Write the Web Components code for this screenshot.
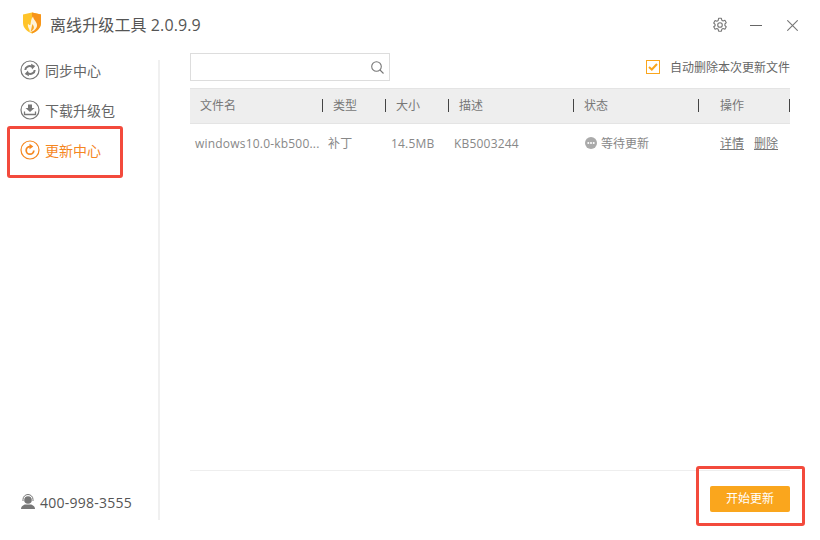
<!DOCTYPE html>
<html><head><meta charset="utf-8"><style>
html,body{margin:0;padding:0;background:#fff}
body{width:820px;height:540px;overflow:hidden;font-family:"Open Sans","Noto Sans CJK SC",sans-serif;color:#666}
</style></head><body>
<app-window>
  <title-bar slot="title"></title-bar>
  <side-nav slot="side">
    <nav-item icon="sync">同步中心</nav-item>
    <nav-item icon="down">下载升级包</nav-item>
    <nav-item icon="update" active mark>更新中心</nav-item>
  </side-nav>
  <update-panel slot="main"></update-panel>
</app-window>
<script>
const def=(n,html,cls)=>{customElements.define(n,class extends HTMLElement{constructor(){super();const s=this.attachShadow({mode:'open'});s.innerHTML=html;cls&&cls.call(this,s)}})};

def('app-window',`<style>
:host{display:grid;grid-template-columns:160px 1fr;grid-template-rows:50px 1fr;width:820px;height:540px}
.t{grid-column:1/3}
</style><div class="t"><slot name="title"></slot></div><slot name="side"></slot><slot name="main"></slot>`);

def('title-bar',`<style>
:host{display:flex;align-items:center;height:50px;padding:0 22px 2px 22px;box-sizing:border-box}
.logo{width:20px;height:22px;margin-right:8px;flex:none;margin-top:-2px}
.n{font-size:16px;color:#555;flex:1;letter-spacing:.1px;white-space:nowrap}
.c{display:flex;align-items:center;margin-top:2px}
svg{display:block}
</style>
<svg class="logo" viewBox="0 0 20 22"><path d="M1 2.500 L10 .5 L19 2.500 V11 C19 16.500 14 20 10 21.500 C6 20 1 16.500 1 11Z" fill="#ffc42a"/><path d="M10 .5 L19 2.500 V11 C19 16.500 14 20 10 21.500Z" fill="#f7941a"/><path d="M11 4.500 C11.500 8 15.500 10 15 14 C14.500 17.500 11 19.500 7.500 20.500 C9 18 5 16 6 11.500 C6.800 13 8 13.500 8.500 12.500 C9 10 8.800 7 11 4.500Z" fill="#fff3da"/><path d="M10.500 12 C11.500 14 12.500 15 11.500 17 C10.800 18.300 9.500 19 8.500 19.700 C9.500 17 9.500 15 10.500 12Z" fill="#f9a826"/></svg>
<div class="n">离线升级工具 2.0.9.9</div>
<div class="c">
<svg width="16" height="16" viewBox="0 0 16 16" fill="none" stroke="#777" stroke-width="1.100" style="margin-right:22px"><path d="M6.600 1.300h2.800l.4 1.900 1.300.7 1.800-.6 1.400 2.400-1.400 1.300v1.500l1.400 1.300-1.400 2.400-1.800-.6-1.300.7-.4 1.900H6.600l-.4-1.900-1.300-.7-1.800.6-1.400-2.400L3.100 8.700V7.300L1.700 6l1.400-2.400 1.800.6 1.300-.7z" stroke-linejoin="round"/><circle cx="8" cy="8" r="2.300"/></svg>
<svg width="12" height="12" viewBox="0 0 12 12" style="margin-right:25px"><path d="M0 6.500H12" stroke="#666" stroke-width="1"/></svg>
<svg width="11" height="11" viewBox="0 0 11 11"><path d="M.3.300 10.700 10.700M10.700.300 .3 10.700" stroke="#777" stroke-width="1.100"/></svg>
</div>`);

def('side-nav',`<style>
:host{display:flex;flex-direction:column;height:460px;margin-top:10px;border-right:2px solid #f0f0f0;box-sizing:border-box;width:160px;padding-left:20px}
.list{display:flex;flex-direction:column;flex:1;margin-top:-10px}
.tel{display:flex;align-items:center;gap:4px;font-size:14px;letter-spacing:.25px;color:#555;height:20px;margin-bottom:8px}
svg{display:block}
</style><div class="list"><slot></slot></div>
<div class="tel"><svg width="16" height="16" viewBox="0 0 16 16"><circle cx="8" cy="6" r="3.800" fill="#777"/><path d="M3 7V5.500a5 5 0 0 1 10 0V7" fill="none" stroke="#777" stroke-width="1"/><path d="M1 15c0-3 3-4.500 4.500-4.500h5C12 10.500 15 12 15 15z" fill="#777"/></svg>400-998-3555</div>`);

const icons={
 sync:`<circle cx="10" cy="10" r="9" fill="none" stroke="C" stroke-width="1.200"/><path d="M5.300 10C5.300 7 9 5 12.300 6.800" fill="none" stroke="C" stroke-width="2"/><path d="M11 3.800 15.300 6 12 9.500z" fill="C"/><path d="M14.700 10C14.700 13 11 15 7.700 13.200" fill="none" stroke="C" stroke-width="2"/><path d="M9 16.200 4.700 14 8 10.500z" fill="C"/>`,
 down:`<circle cx="10" cy="10" r="9" fill="none" stroke="C" stroke-width="1.200"/><path d="M8 4.500h4V8h2.500L10 12 5.500 8H8z" fill="C"/><path d="M4.500 11.500V14.500H15.500V11.500" fill="none" stroke="C" stroke-width="1.300"/>`,
 update:`<circle cx="10" cy="10" r="9" fill="none" stroke="C" stroke-width="1.200"/><path d="M13.800 10.500A3.800 3.800 0 1 1 10 6.600" fill="none" stroke="C" stroke-width="1.800"/><path d="M9.500 3.800 13.300 6.500 9.500 9.200z" fill="C"/>`
};
def('nav-item',`<style>
:host{display:flex;align-items:center;height:40px;position:relative;font-size:14px;color:#666;white-space:nowrap}
:host([active]){color:#f5871f}
svg{display:block;margin-right:5px}
.mark{position:absolute;left:-13px;top:-4px;width:116px;height:52px;box-sizing:border-box;border:3px solid #f34a3c;border-radius:3px;display:none}
:host([mark]) .mark{display:block}
</style><svg width="20" height="20" viewBox="0 0 20 20"></svg><slot></slot><div class="mark"></div>`,function(s){
 const c=this.hasAttribute('active')?'#f5871f':'#777';
 s.querySelector('svg').innerHTML=(icons[this.getAttribute('icon')]||'').replace(/"C"/g,`"${c}"`);
});

def('update-panel',`<style>
:host{display:flex;flex-direction:column;height:490px;padding:3px 30px 0;box-sizing:border-box;width:660px;position:relative;font-size:12px}
.top{display:flex;justify-content:space-between;align-items:center;height:28px;margin-bottom:7px}
.search{width:200px;height:28px;box-sizing:border-box;border:1px solid #ddd;display:flex;align-items:center;justify-content:flex-end;padding-right:4px}
.auto{display:flex;align-items:center;gap:10px;color:#666}
.box{width:14px;height:14px;box-sizing:border-box;border:1px solid #faa61d;display:flex;align-items:center;justify-content:center}
.g{display:grid;grid-template-columns:133px 63px 63px 125px 125px 91px}
.head{height:36px;box-sizing:border-box;background:#eee;border-top:1px solid #e4e4e4;border-bottom:1px solid #e4e4e4;color:#777;align-items:center}
.head span{padding-left:10px;position:relative;line-height:12px}
.head span.l::before{content:"";position:absolute;left:-1px;top:-1px;height:13px;width:1px;background:#444}
.head span.e::after{content:"";position:absolute;right:0;top:-1px;height:13px;width:1px;background:#444}
.head span.a{padding-left:21px}
.row{height:38px;align-items:center;color:#888;letter-spacing:.2px}
.row>div{padding-left:5px;white-space:nowrap}
.st{display:flex;align-items:center;gap:4px;padding-left:11px!important;letter-spacing:0}
.ops{padding-left:21px!important;letter-spacing:0}
.ops u{margin-right:10px;color:#777}
.sp{flex:1}
.foot{border-top:1px solid #eee;height:70px;box-sizing:border-box;display:flex;justify-content:flex-end;align-items:flex-start;padding-top:15px;position:relative}
button{width:80px;height:26px;border:0;border-radius:2px;background:#faa61d;color:#fff;font:12px "Open Sans","Noto Sans CJK SC",sans-serif;padding:0 0 2px}
.mark{position:absolute;left:506px;top:-5px;width:109px;height:60px;box-sizing:border-box;border:3px solid #f34a3c;border-radius:3px}
svg{display:block}
</style>
<div class="top"><div class="search"><svg width="15" height="15" viewBox="0 0 15 15" fill="none" stroke="#777" stroke-width="1.100"><circle cx="6.500" cy="6.500" r="4.800"/><path d="M10 10l3.500 3.500"/></svg></div>
<div class="auto"><div class="box"><svg width="10" height="8" viewBox="0 0 10 8" fill="none" stroke="#faa61d" stroke-width="2"><path d="M1 4l2.800 2.500L9 1"/></svg></div><span>自动删除本次更新文件</span></div></div>
<div class="g head"><span>文件名</span><span class="l">类型</span><span class="l">大小</span><span class="l">描述</span><span class="l">状态</span><span class="l e a">操作</span></div>
<div class="g row"><div>windows10.0-kb500...</div><div>补丁</div><div>14.5MB</div><div>KB5003244</div>
<div class="st"><svg width="12" height="12" viewBox="0 0 12 12"><circle cx="6" cy="6" r="6" fill="#aaa"/><circle cx="3.300" cy="6" r="1" fill="#fff"/><circle cx="6" cy="6" r="1" fill="#fff"/><circle cx="8.700" cy="6" r="1" fill="#fff"/></svg>等待更新</div>
<div class="ops"><u>详情</u><u>删除</u></div></div>
<div class="sp"></div>
<div class="foot"><button>开始更新</button><div class="mark"></div></div>`);
</script></body></html>
